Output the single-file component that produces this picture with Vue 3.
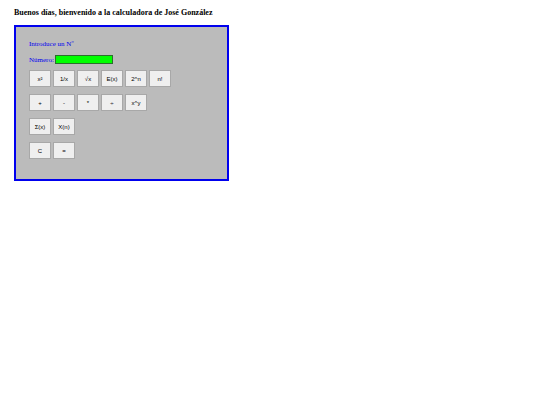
<template>
  <main class="page">
    <h1>Buenos días, bienvenido a la calculadora de José González</h1>

    <form class="calculadora" @submit.prevent>
      <p>Introduce un Nº</p>
      <div class="campo">
        <label for="numero">Número:</label>
        <input id="numero" v-model="numero" type="text" autocomplete="off" />
      </div>

      <div v-for="(fila, i) in filas" :key="i" class="fila">
        <button v-for="tecla in fila" :key="tecla" type="button" @click="pulsar(tecla)">{{ tecla }}</button>
      </div>
    </form>
  </main>
</template>

<script setup>
import { ref } from 'vue';

const numero = ref('');
const anterior = ref(null);
const operacion = ref('');

const filas = [
  ['x²', '1/x', '√x', 'E(x)', '2^n', 'n!'],
  ['+', '-', '*', '÷', 'x^y'],
  ['Σ(x)', 'X(n)'],
  ['C', '=']
];

const factorial = (n) => (n <= 1 ? 1 : n * factorial(n - 1));

const lista = () => numero.value.split(',').map(Number);
const suma = (valores) => valores.reduce((a, b) => a + b, 0);

// operaciones de un solo operando
const unarias = {
  'x²': (n) => n * n,
  '1/x': (n) => 1 / n,
  '√x': (n) => Math.sqrt(n),
  'E(x)': (n) => Math.trunc(n),
  '2^n': (n) => 2 ** n,
  'n!': (n) => (n > 170 ? Infinity : factorial(Math.trunc(n))),
  'Σ(x)': () => suma(lista()),
  'X(n)': () => suma(lista()) / lista().length
};

const binarias = {
  '+': (a, b) => a + b,
  '-': (a, b) => a - b,
  '*': (a, b) => a * b,
  '÷': (a, b) => a / b,
  'x^y': (a, b) => a ** b
};

function pulsar(tecla) {
  if (tecla === 'C') {
    numero.value = '';
    anterior.value = null;
    operacion.value = '';
  } else if (tecla === '=') {
    if (!operacion.value) return;
    numero.value = String(binarias[operacion.value](anterior.value, Number(numero.value)));
    operacion.value = '';
  } else if (binarias[tecla]) {
    anterior.value = Number(numero.value);
    operacion.value = tecla;
    numero.value = '';
  } else {
    numero.value = String(unarias[tecla](Number(numero.value)));
  }
}
</script>

<style>
body {
  margin: 0;
  background: #fff;
}
</style>

<style scoped>
.page {
  padding: 8px 14px;
  font-family: "Liberation Serif", "Times New Roman", serif;
}
h1 {
  margin: 0 0 7px;
  font-size: 8px;
  line-height: 10px;
  font-weight: bold;
  color: #000;
}
.calculadora {
  box-sizing: border-box;
  width: 42%;
  padding: 13px 13px 20px;
  border: 2px solid #00e;
  background: #bbb;
  color: #00e;
  font-size: 7px;
  line-height: 8px;
}
p { margin: 0 0 7px; }
.campo {
  display: flex;
  align-items: center;
  gap: 1px;
  margin-bottom: 6px;
}
input {
  box-sizing: border-box;
  width: 58px;
  height: 9px;
  padding: 0 1px;
  border: 1px solid #2c6e2c;
  background: #0f0;
  font-family: "Liberation Sans", Arial, sans-serif;
  font-size: 6px;
}
.fila {
  display: flex;
  gap: 2px;
  margin-bottom: 7px;
}
.fila:last-child { margin-bottom: 0; }
button {
  box-sizing: border-box;
  width: 22px;
  height: 17px;
  padding: 0;
  border: 1px solid #a8a8a8;
  background: #efefef;
  color: #000;
  font-family: "Liberation Sans", Arial, sans-serif;
  font-size: 6px;
}
</style>
